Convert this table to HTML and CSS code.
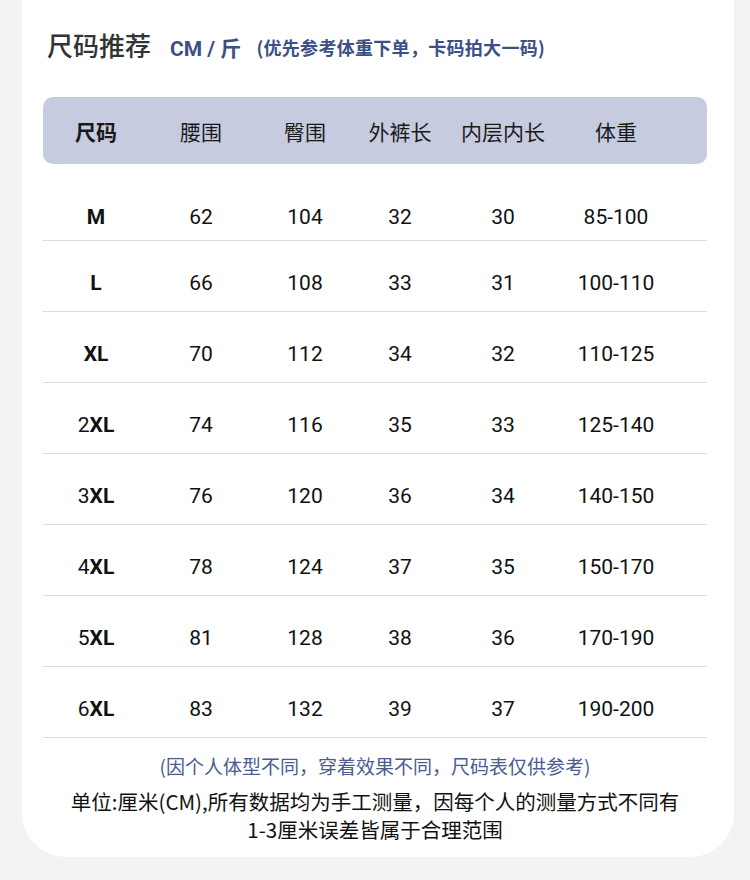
FILE: index.html
```html
<!DOCTYPE html>
<html lang="zh">
<head>
<meta charset="utf-8">
<link rel="stylesheet" href="styles.css">
</head>
<body>
<div class="card">
  <div class="title-row">
    <span class="title">尺码推荐</span>
    <span class="unit">CM / 斤</span>
    <span class="hint">(优先参考体重下单，卡码拍大一码)</span>
  </div>
  <div class="table">
    <div class="thead">
      <div class="c bold">尺码</div>
      <div class="c">腰围</div>
      <div class="c">臀围</div>
      <div class="c">外裤长</div>
      <div class="c">内层内长</div>
      <div class="c">体重</div>
    </div>
    <div class="row first"><div class="c size">M</div><div class="c">62</div><div class="c">104</div><div class="c">32</div><div class="c">30</div><div class="c">85-100</div></div>
    <div class="row"><div class="c size">L</div><div class="c">66</div><div class="c">108</div><div class="c">33</div><div class="c">31</div><div class="c">100-110</div></div>
    <div class="row"><div class="c size">XL</div><div class="c">70</div><div class="c">112</div><div class="c">34</div><div class="c">32</div><div class="c">110-125</div></div>
    <div class="row"><div class="c size"><span class="n">2</span>XL</div><div class="c">74</div><div class="c">116</div><div class="c">35</div><div class="c">33</div><div class="c">125-140</div></div>
    <div class="row"><div class="c size"><span class="n">3</span>XL</div><div class="c">76</div><div class="c">120</div><div class="c">36</div><div class="c">34</div><div class="c">140-150</div></div>
    <div class="row"><div class="c size"><span class="n">4</span>XL</div><div class="c">78</div><div class="c">124</div><div class="c">37</div><div class="c">35</div><div class="c">150-170</div></div>
    <div class="row"><div class="c size"><span class="n">5</span>XL</div><div class="c">81</div><div class="c">128</div><div class="c">38</div><div class="c">36</div><div class="c">170-190</div></div>
    <div class="row"><div class="c size"><span class="n">6</span>XL</div><div class="c">83</div><div class="c">132</div><div class="c">39</div><div class="c">37</div><div class="c">190-200</div></div>
  </div>
  <p class="note">(因个人体型不同，穿着效果不同，尺码表仅供参考)</p>
  <p class="desc">单位:厘米(CM),所有数据均为手工测量，因每个人的测量方式不同有<br>1-3厘米误差皆属于合理范围</p>
</div>
</body>
</html>
```
FILE: styles.css
```css
html, body {
  margin: 0;
  padding: 0;
  background: #f3f3f3;
}
body {
  font-family: "Noto Sans CJK SC", "Noto Sans", sans-serif;
  color: #222;
}
.card {
  margin-left: 22px;
  width: 712px;
  background: #fff;
  border-radius: 0 0 44px 44px;
  padding: 27px 27px 14px 21px;
  box-sizing: border-box;
}
.title-row {
  display: flex;
  align-items: center;
  height: 36px;
  padding-left: 4px;
}
.title {
  font-size: 26px;
  font-weight: 500;
  color: #333;
  line-height: 36px;
}
.unit {
  margin-left: 19px;
  font-family: Roboto, "Noto Sans CJK SC", sans-serif;
  font-size: 21px;
  font-weight: 700;
  color: #3c4f86;
  margin-top: 3px;
}
.hint {
  margin-left: 15px;
  font-size: 18px;
  font-weight: 700;
  color: #3c4f86;
  margin-top: 4px;
  letter-spacing: 0.3px;
}
.table {
  margin-top: 34px;
}
.thead, .row {
  display: grid;
  grid-template-columns: 106px 104px 104px 86px 120px 106px 1fr;
}
.thead {
  height: 67px;
  background: #c6cbdf;
  border-radius: 10px;
  align-items: center;
  font-size: 21px;
  color: #1a1a1a;
}
.c {
  text-align: center;
  white-space: nowrap;
}
.bold {
  font-weight: 700;
}
.row {
  height: 71px;
  box-sizing: border-box;
  padding-top: 13px;
  align-items: center;
  border-bottom: 1px solid #dcdcdc;
  font-family: Roboto, "Noto Sans", sans-serif;
  font-size: 21px;
  color: #111;
}
.row.first {
  height: 77px;
  padding-top: 29px;
}
.size {
  font-weight: 700;
}
.size .n {
  font-weight: 400;
}
.note {
  margin: 14px 0 0;
  text-align: center;
  font-size: 19px;
  line-height: 28px;
  color: #4d5b8f;
}
.desc {
  margin: 7px 0 0;
  text-align: center;
  font-size: 20.5px;
  line-height: 28px;
  color: #111;
}
```
